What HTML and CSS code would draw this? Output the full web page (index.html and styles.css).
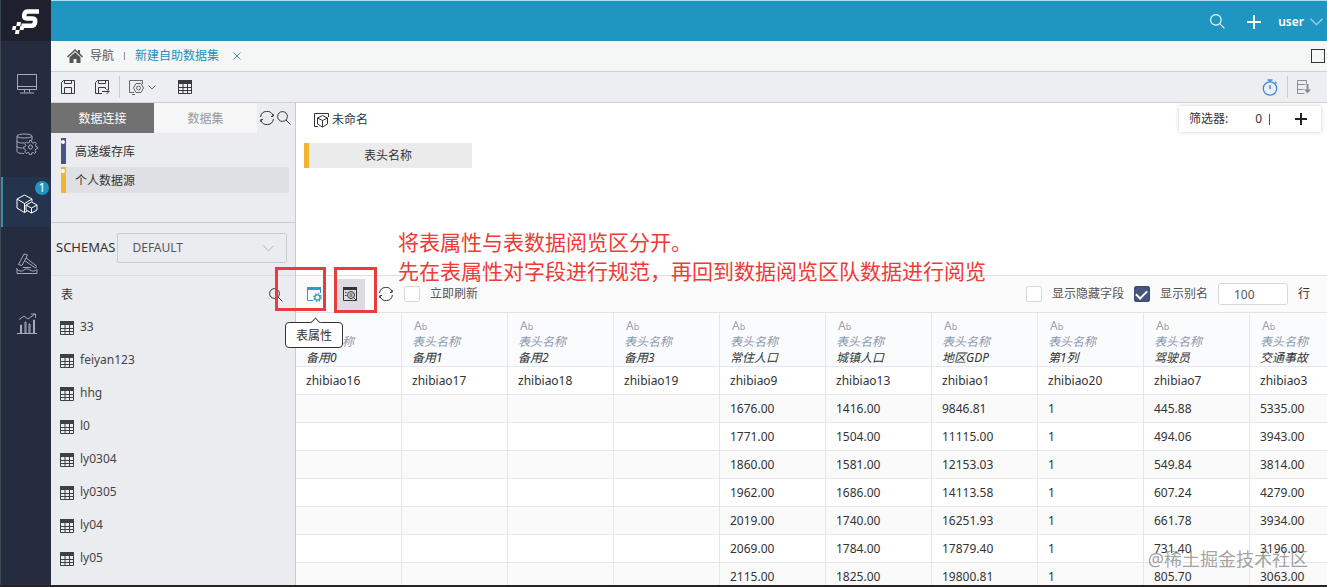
FILE: index.html
```html
<!DOCTYPE html>
<html lang="zh-CN">
<head>
<meta charset="utf-8">
<title>新建自助数据集</title>
<link rel="stylesheet" href="styles.css">
</head>
<body>
<svg class="defs" aria-hidden="true">
  <symbol id="grid" viewBox="0 0 14 14"><path d="M.5 1h13v12.500H.5zM.5 7.500h13M.5 10.500h13M5 4v9.500M9.500 4v9.500" fill="none" stroke="currentColor"/><path d="M0 0h14v4H0z" fill="currentColor"/></symbol>
  <symbol id="search" viewBox="0 0 14 14"><circle cx="5.500" cy="5.500" r="4.900" fill="none" stroke="currentColor"/><path d="M9 9l4.500 4.500" stroke="currentColor"/></symbol>
  <symbol id="refresh" viewBox="0 0 14 14"><path d="M.6 6A6.400 6.400 0 0 1 13.100 5M13.400 8A6.400 6.400 0 0 1 .9 9M11 5.500l2.200-.2.500-2M3 8.500l-2.200.2-.5 2" fill="none" stroke="currentColor"/></symbol>
  <symbol id="chev" viewBox="0 0 12 7"><path d="M.5.5L6 6 11.500.5" fill="none" stroke="currentColor"/></symbol>
  <symbol id="cube" viewBox="0 0 15 15"><path d="M4 13.500H.5V.5h14V4M8.500 2.500l5 2.500v6l-5 3-5-3V5zM3.500 5l5 2.500 5-2.500M8.500 7.500V14" fill="none" stroke="currentColor"/></symbol>
</svg>
<div class="app">
  <nav class="rail">
    <a class="logo" href="#" aria-label="首页"><svg width="28" height="26" viewBox="0 0 28 26"><path d="M27 2.500H16c-2.500 0-3.300.8-3.700 3.300-.4 2.700.2 3.700 2.700 3.700h5.500c2.300 0 3 .9 2.600 3.700-.4 2.600-1.300 3.600-3.600 3.600H9.500" fill="none" stroke="#fff" stroke-width="4.600"/><path d="M5 13h4l-.7 4h-4zM.8 17h3.500l-.7 4H0zM8.300 17h4l-.7 4h-4zM3.600 21h4L7 25H3z" fill="#fff"/></svg></a>
    <a class="rail-item" href="#" aria-label="仪表板"><svg width="22" height="22" viewBox="0 0 22 22"><path d="M1.500 1.500h19v15h-19zM1.500 13.500h19M8.500 16.500v3M13.500 16.500v3M4 20h14"/></svg></a>
    <a class="rail-item" href="#" aria-label="数据源"><svg width="22" height="22" viewBox="0 0 22 22"><ellipse cx="8.500" cy="3" rx="7.500" ry="2"/><path d="M1 3v15.500c0 1.300 3 2 7 2M16 3v4M1 8c0 1.500 3 2 7.500 2M1 13c0 1.500 2 2 5.500 2"/><circle cx="14.500" cy="14" r="2"/><path d="M13.500 7.500h2l.4 2 1.300.6 1.700-1.100 1.500 1.500-1.100 1.700.5 1.300 1.700.5v1.500l-1.900.6-.5 1.300 1 1.600-1.500 1.500-1.600-1-1.300.6-.4 1.700h-1.700l-.5-1.800-1.300-.5-1.600 1-1.500-1.500 1-1.600-.6-1.300-1.700-.6v-1.500l1.800-.5.6-1.300-1.100-1.700 1.500-1.500 1.700 1.100 1.300-.6z"/></svg></a>
    <a class="rail-item active" href="#" aria-label="数据集"><svg width="22" height="20" viewBox="0 0 22 20"><path d="M8.500 1l7.500 4v2.500M8.500 1L1 5v9l7.500 4.500 2.500-1.500M1 5l7.500 4.500L16 5M8.500 9.500v9M15.500 8l5.500 3v5l-5.500 3-5.500-3v-5zM10 11l5.500 3 5.500-3M15.500 14v5"/></svg><span class="badge">1</span></a>
    <a class="rail-item" href="#" aria-label="实验"><svg width="22" height="22" viewBox="0 0 22 22"><path d="M8 1l3.500 1L6 12.500l-3.500-1zM10 5l10.500 8-1 2L8.500 7.500M1 15v5.500h20v-4c-2 2-5 2-7 .5s-5-1.500-6 0-5 1.500-7-.5M7 14.500h8"/></svg></a>
    <a class="rail-item" href="#" aria-label="报表"><svg width="20" height="22" viewBox="0 0 20 22"><path d="M0 20.500h20M2 6.500l5-3.500 4 3 7-5M14 1h4.500v4M3.500 12h1v8h-1zM8 9h1v11H8zM12 11h1v9h-1zM16.500 7h1v13h-1z"/></svg></a>
  </nav>
  <div class="main">
    <header class="topbar">
      <button class="ib" aria-label="搜索"><svg width="15" height="15"><use href="#search"/></svg></button>
      <button class="ib" aria-label="新建"><svg width="14" height="14" viewBox="0 0 14 14"><path d="M7 0v14M0 7h14" stroke="#fff" stroke-width="2"/></svg></button>
      <button class="ib user">user<svg width="13" height="8"><use href="#chev"/></svg></button>
    </header>
    <div class="crumbs">
      <a class="home" href="#"><svg width="16" height="14" viewBox="0 0 16 14"><path d="M8 0l3 2.800V1h2v3.600L16 7.500l-1 1L8 2 1 8.500l-1-1z"/><path d="M8 3.200l5.500 5V14h-4v-4h-3v4h-4V8.200z"/></svg>导航</a>
      <span class="pipe"></span>
      <a class="current" href="#">新建自助数据集</a>
      <button class="ib close" aria-label="关闭"><svg width="8" height="8" viewBox="0 0 8 8"><path d="M.5.5l7 7M7.500.5l-7 7" stroke="currentColor"/></svg></button>
      <button class="ib max" aria-label="最大化"></button>
    </div>
    <div class="tools">
      <button class="ib" aria-label="保存"><svg width="14" height="14" viewBox="0 0 14 14"><path d="M.5 2.500l2-2h11v13H.5zM3.500.5v3h7v-3M3.500 13.500v-6h7v6" fill="none" stroke="currentColor"/></svg></button>
      <button class="ib saveas" aria-label="另存为"><svg width="15" height="15" viewBox="0 0 15 15"><path d="M7 13.500H.5v-11l2-2h11V10M3.500.5v3h7v-3M3.500 13.500v-6h7V9M7 11.500h7M11.500 9l2.500 2.500-2.500 2.500" fill="none" stroke="currentColor"/></svg></button>
      <span class="rule"></span>
      <button class="ib setting" aria-label="设置"><svg width="15" height="15" viewBox="0 0 15 15"><path d="M5 12.500H.5V.5h13V4M3 14.500h3" fill="none" stroke="currentColor"/><path d="M7 3.500h5l2.500 4.500-2.500 4.500H7L4.500 8z" fill="none" stroke="currentColor"/><circle cx="9.500" cy="8" r="2" fill="none" stroke="currentColor"/></svg><svg width="8" height="5" viewBox="0 0 8 5"><path d="M.5.5L4 4 7.500.5" fill="none" stroke="currentColor"/></svg></button>
      <button class="ib gridbtn" aria-label="表格"><svg width="14" height="14"><use href="#grid"/></svg></button>
      <button class="ib timer" aria-label="定时"><svg width="16" height="17" viewBox="0 0 16 17"><circle cx="8" cy="9.500" r="6.700" fill="none" stroke="currentColor" stroke-width="1.300"/><path d="M8 6v4M5.500 1h5M8 1v2M13 3l1.500 1.500" stroke="currentColor" stroke-width="1.500"/></svg></button>
      <span class="rule"></span>
      <button class="ib sort" aria-label="排序"><svg width="14" height="14" viewBox="0 0 14 14"><path d="M9.500 4V.5H.5v13h7M.5 4.500h8M.5 9.500h6" fill="none" stroke="currentColor"/><path d="M9.500 4h2v5.500H14l-3.500 4L7 9.500h2.500z" fill="currentColor"/></svg></button>
    </div>
    <div class="body">
      <aside class="side">
        <div class="tabs">
          <button class="tab on">数据连接</button><button class="tab">数据集</button>
          <button class="ib" aria-label="刷新"><svg width="14" height="14"><use href="#refresh"/></svg></button>
          <button class="ib" aria-label="搜索"><svg width="14" height="14"><use href="#search"/></svg></button>
        </div>
        <div class="sources">
          <a class="source blue" href="#">高速缓存库</a>
          <a class="source gold" href="#">个人数据源</a>
        </div>
        <div class="schema">
          <label for="schema">SCHEMAS</label>
          <span class="select"><select id="schema"><option>DEFAULT</option></select><svg width="11" height="7"><use href="#chev"/></svg></span>
        </div>
        <div class="tablehead"><span>表</span><button class="ib" aria-label="搜索表"><svg width="14" height="14"><use href="#search"/></svg></button></div>
        <div class="tables">
          <a href="#"><svg width="14" height="14"><use href="#grid"/></svg><span>33</span></a>
          <a href="#"><svg width="14" height="14"><use href="#grid"/></svg><span>feiyan123</span></a>
          <a href="#"><svg width="14" height="14"><use href="#grid"/></svg><span>hhg</span></a>
          <a href="#"><svg width="14" height="14"><use href="#grid"/></svg><span>l0</span></a>
          <a href="#"><svg width="14" height="14"><use href="#grid"/></svg><span>ly0304</span></a>
          <a href="#"><svg width="14" height="14"><use href="#grid"/></svg><span>ly0305</span></a>
          <a href="#"><svg width="14" height="14"><use href="#grid"/></svg><span>ly04</span></a>
          <a href="#"><svg width="14" height="14"><use href="#grid"/></svg><span>ly05</span></a>
        </div>
      </aside>
      <main class="work">
        <section class="canvas">
          <div class="canvas-top">
            <span class="name"><svg width="15" height="15"><use href="#cube"/></svg>未命名</span>
            <div class="filter"><span>筛选器:</span><span class="count">0</span><i></i><button class="ib" aria-label="添加筛选"><svg width="12" height="12" viewBox="0 0 12 12"><path d="M6 0v12M0 6h12" stroke="#222" stroke-width="2"/></svg></button></div>
          </div>
          <div class="node">表头名称</div>
        </section>
        <div class="viewbar">
          <button class="ib prop" aria-label="表属性"><svg width="15" height="15" viewBox="0 0 15 15"><path d="M6 13.500H.5V1h13v5" fill="none" stroke="currentColor"/><path d="M0 0h14v3H0z" fill="currentColor"/><circle cx="10.500" cy="10.500" r="2.600" fill="none" stroke="currentColor" stroke-width="1.300"/><circle cx="10.500" cy="10.500" r="3.800" fill="none" stroke="currentColor" stroke-width="1.300" stroke-dasharray="1.500 1.480"/></svg><span class="tip">表属性</span></button>
          <button class="ib preview" aria-label="数据阅览"><svg width="14" height="14" viewBox="0 0 14 14"><path d="M.5 1h13v12.500H.5zM2 5.500h1.500M2 8.500h1.500" fill="none" stroke="currentColor"/><path d="M0 0h14v3H0z" fill="currentColor"/><circle cx="8" cy="8" r="3.500" fill="none" stroke="currentColor"/><path d="M6.500 7h3M6.500 9h3M10.500 10.500l2.500 2.500" stroke="currentColor"/></svg></button>
          <button class="ib reload" aria-label="刷新"><svg width="14" height="14"><use href="#refresh"/></svg></button>
          <label class="check"><input type="checkbox">立即刷新</label>
          <div class="options">
            <label class="check"><input type="checkbox">显示隐藏字段</label>
            <label class="check"><input type="checkbox" checked>显示别名</label>
            <input class="rows" id="rows" type="text" value="100"><label for="rows">行</label>
          </div>
        </div>
        <div class="data">
        <table>
          <thead><tr>
            <th><b>A<small>b</small></b><em>表头名称</em><strong>备用0</strong></th><th><b>A<small>b</small></b><em>表头名称</em><strong>备用1</strong></th><th><b>A<small>b</small></b><em>表头名称</em><strong>备用2</strong></th><th><b>A<small>b</small></b><em>表头名称</em><strong>备用3</strong></th><th><b>A<small>b</small></b><em>表头名称</em><strong>常住人口</strong></th><th><b>A<small>b</small></b><em>表头名称</em><strong>城镇人口</strong></th><th><b>A<small>b</small></b><em>表头名称</em><strong>地区GDP</strong></th><th><b>A<small>b</small></b><em>表头名称</em><strong>第1列</strong></th><th><b>A<small>b</small></b><em>表头名称</em><strong>驾驶员</strong></th><th><b>A<small>b</small></b><em>表头名称</em><strong>交通事故</strong></th>
          </tr></thead>
          <tbody>
            <tr><td>zhibiao16</td><td>zhibiao17</td><td>zhibiao18</td><td>zhibiao19</td><td>zhibiao9</td><td>zhibiao13</td><td>zhibiao1</td><td>zhibiao20</td><td>zhibiao7</td><td>zhibiao3</td></tr>
            <tr><td></td><td></td><td></td><td></td><td>1676.00</td><td>1416.00</td><td>9846.81</td><td>1</td><td>445.88</td><td>5335.00</td></tr>
            <tr><td></td><td></td><td></td><td></td><td>1771.00</td><td>1504.00</td><td>11115.00</td><td>1</td><td>494.06</td><td>3943.00</td></tr>
            <tr><td></td><td></td><td></td><td></td><td>1860.00</td><td>1581.00</td><td>12153.03</td><td>1</td><td>549.84</td><td>3814.00</td></tr>
            <tr><td></td><td></td><td></td><td></td><td>1962.00</td><td>1686.00</td><td>14113.58</td><td>1</td><td>607.24</td><td>4279.00</td></tr>
            <tr><td></td><td></td><td></td><td></td><td>2019.00</td><td>1740.00</td><td>16251.93</td><td>1</td><td>661.78</td><td>3934.00</td></tr>
            <tr><td></td><td></td><td></td><td></td><td>2069.00</td><td>1784.00</td><td>17879.40</td><td>1</td><td>731.40</td><td>3196.00</td></tr>
            <tr><td></td><td></td><td></td><td></td><td>2115.00</td><td>1825.00</td><td>19800.81</td><td>1</td><td>805.70</td><td>3063.00</td></tr>
          </tbody>
        </table>
        </div>
      </main>
    </div>
  </div>
  <div class="mark mark-prop"></div>
  <div class="mark mark-preview"></div>
  <p class="note">将表属性与表数据阅览区分开。<br>先在表属性对字段进行规范，再回到数据阅览区队数据进行阅览</p>
  <div class="watermark">@稀土掘金技术社区</div>
</div>
</body>
</html>
```
FILE: styles.css
```css
* { box-sizing: border-box; }
body { margin: 0; font: 12px/18px "Noto Sans", "Noto Sans CJK SC", sans-serif; color: #333; }
a { color: inherit; text-decoration: none; }
svg { display: block; flex: none; }
button, input, select { font: inherit; color: inherit; }
.defs { position: absolute; width: 0; height: 0; }
.ib { border: 0; background: none; padding: 0; display: flex; align-items: center; flex: none; }
.app { position: relative; display: flex; height: 100vh; overflow: hidden; border-bottom: 2px solid #2a2222; }

.rail { width: 51px; flex: none; background: #262c40; border-left: 1px solid #3a4650; }
.logo { display: flex; align-items: center; justify-content: center; height: 41px; margin-bottom: 16px; padding-top: 2px; background: #1e202e; }
.rail-item { position: relative; display: flex; align-items: center; justify-content: center; height: 50px; margin-bottom: 10px; color: #a3abbc; border-left: 2px solid transparent; padding-top: 4px; }
.rail-item svg { fill: none; stroke: currentColor; }
.rail-item.active { color: #fff; background: #25334d; border-left-color: #3c8fa9; }
.badge { position: absolute; right: 2px; top: 4px; width: 14px; height: 14px; border-radius: 7px; background: #2095c1; color: #fff; font-size: 12px; line-height: 14px; text-align: center; }

.main { flex: 1; min-width: 0; display: flex; flex-direction: column; }
.topbar { display: flex; align-items: center; justify-content: flex-end; gap: 22px; height: 41px; flex: none; padding: 1px 4px 0 0; background: #1e96c1; border-top: 1px solid #a9e1ed; color: #fff; }
.user { gap: 6px; margin-left: -5px; font-weight: 600; }
.user svg { color: #a8d8e9; }
.crumbs { display: flex; align-items: center; height: 31px; flex: none; padding: 0 2px 0 16px; background: #f5f6f6; border-bottom: 1px solid #ced1d3; color: #555; }
.home { display: flex; align-items: center; gap: 7px; }
.home svg { fill: #555; }
.pipe { width: 1px; height: 8px; margin: 0 10px; background: #888; }
.current { color: #238fbd; }
.close { margin-left: 14px; color: #4c8fb2; }
.max { width: 14px; height: 14px; margin-left: auto; border: 1px solid #333; }
.tools { display: flex; align-items: center; height: 31px; flex: none; padding: 0 16px 0 10px; background: #edeef1; border-bottom: 1px solid #ced1d3; color: #3b3745; }
.saveas { margin-left: 20px; }
.rule { width: 1px; height: 22px; margin: 0 9px; background: #c9cbd0; }
.setting { gap: 4px; color: #666; }
.gridbtn { margin-left: 22px; }
.timer { margin-left: auto; color: #3d8ddf; }
.sort { color: #8b8c98; }

.body { display: flex; flex: 1; min-height: 0; }
.side { width: 245px; flex: none; overflow: hidden; background: #ebecf0; border-right: 1px solid #c8cacf; }
.tabs { display: flex; align-items: center; height: 30px; padding-right: 4px; }
.tab { width: 103px; height: 30px; border: 0; padding: 2px 0 0; background: #f6f6f7; color: #999; }
.tab.on { background: #717171; color: #fff; }
.tabs .ib { margin-left: 3px; }
.sources { display: flex; flex-direction: column; gap: 3px; height: 90px; padding: 5px 6px 0 10px; border-bottom: 1px solid #c8cacf; }
.source { position: relative; height: 26px; padding-left: 9px; line-height: 28px; border-left: 5px solid #475487; }
.source::before { content: ""; position: absolute; left: -5px; top: 2px; width: 4px; height: 4px; border-radius: 50%; background: #fff; }
.source.gold { border-left-color: #f2b52f; background: #dfe0e4; }
.schema { display: flex; align-items: center; gap: 2px; height: 53px; padding: 0 8px 2px 5px; border-bottom: 1px solid #d8dade; font-size: 13px; }
.schema label { padding-bottom: 2px; }
.select { position: relative; flex: 1; display: flex; }
.select select { appearance: none; width: 100%; height: 30px; padding: 0 14px; border: 1px solid #c9ccd1; border-radius: 2px; background: #ebecf0; color: #555; font-size: 12px; }
.select svg { position: absolute; right: 13px; top: 12px; color: #aaa; }
.tablehead { display: flex; align-items: center; justify-content: space-between; height: 35px; padding: 2px 12px 0 10px; }
.tables a { display: flex; align-items: center; gap: 6px; height: 33px; padding-left: 9px; color: #444; }
.tables span { padding-bottom: 2px; }
.tables svg { color: #403e46; }

.work { flex: 1; min-width: 0; display: flex; flex-direction: column; background: #fff; }
.canvas { height: 173px; flex: none; border-bottom: 1px solid #dfe0e2; }
.canvas-top { display: flex; justify-content: space-between; padding: 3px 6px 0 18px; height: 40px; }
.name { display: flex; align-items: center; gap: 3px; height: 28px; }
.filter { display: flex; align-items: center; width: 142px; height: 26px; padding: 0 14px 0 10px; box-shadow: 0 0 4px #ccc; }
.count { margin-left: auto; }
.filter i { width: 1px; height: 11px; margin: 0 25px 0 7px; background: #555; }
.node { width: 168px; height: 25px; margin-left: 8px; padding-right: 5px; border-left: 5px solid #efb530; background: #ebebeb; line-height: 26px; text-align: center; }
.viewbar { display: flex; align-items: center; height: 37px; flex: none; padding: 0 17px 0 11px; background: #fbfbfc; border-bottom: 1px solid #dfe3e7; }
.prop { position: relative; color: #2d9cc5; }
.tip { position: absolute; z-index: 2; left: -22px; top: 35px; width: 58px; height: 26px; border: 1px solid #333; border-radius: 4px; background: #fff; color: #333; line-height: 26px; text-align: center; }
.tip::before { content: ""; position: absolute; left: 26px; top: -4px; width: 6px; height: 6px; border: solid #555; border-width: 1px 0 0 1px; background: #fff; transform: rotate(45deg); }
.preview { justify-content: center; width: 30px; height: 31px; margin-left: 13px; background: #dcdbe1; color: #333; }
.reload { margin-left: 14px; }
.viewbar > .check { margin-left: 11px; }
.check { display: flex; align-items: center; gap: 10px; color: #555; }
.check input { appearance: none; width: 16px; height: 16px; margin: 0; border: 1px solid #d8dadd; border-radius: 2px; background: #fff; }
.check input:checked { display: flex; justify-content: center; padding-top: 3px; border-color: #3d4a70; background: #46547f; }
.check input:checked::before { content: ""; width: 9px; height: 5px; border: solid #fff; border-width: 0 0 2px 2px; transform: rotate(-45deg); }
.options { display: flex; align-items: center; gap: 10px; margin-left: auto; }
.rows { width: 70px; height: 22px; padding: 0 15px; border: 1px solid #d5d8dc; border-radius: 3px; background: #fff; color: #555; }

.data { flex: 1; overflow: hidden; }
table { width: 1060px; table-layout: fixed; border-collapse: separate; border-spacing: 0; }
th, td { padding: 0 10px; border: solid #e4e8ee; border-width: 0 1px 1px 0; text-align: left; }
th { height: 54px; padding-top: 5px; background: #fafbfc; font-weight: 400; vertical-align: top; }
th b, th em, th strong { display: block; height: 16px; line-height: 16px; font-weight: 400; white-space: nowrap; }
th b { color: #9aa0ad; padding-left: 2px; }
th small { font-size: 9px; }
th em { color: #8c96ac; }
th strong { font-style: italic; }
td { height: 28px; }
tbody tr:nth-child(even) td { background: #fafafb; }

.mark { position: absolute; z-index: 3; border: 3px solid #e93c3c; }
.mark-prop { left: 275px; top: 267px; width: 51px; height: 44px; }
.mark-preview { left: 334px; top: 267px; width: 43px; height: 46px; }
.note { position: absolute; left: 398px; top: 228px; margin: 0; color: #ee3b35; font-size: 21px; line-height: 29px; white-space: nowrap; }
.watermark { position: absolute; right: 19px; bottom: 14px; color: rgba(110, 110, 110, .65); font-size: 18px; line-height: 24px; }
```
